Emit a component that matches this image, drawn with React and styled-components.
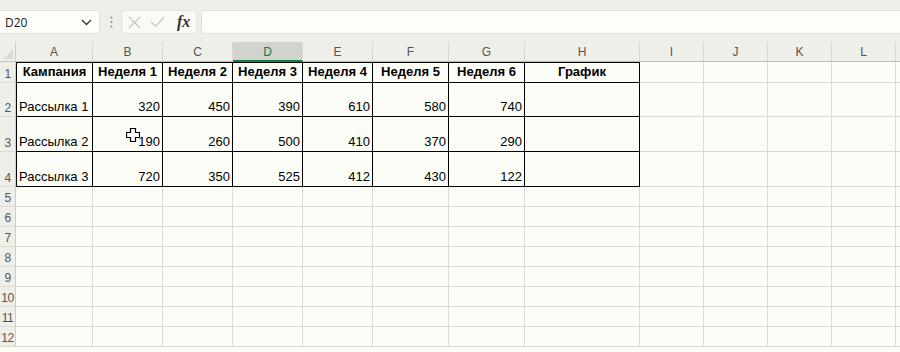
import React from "react";
import styled, { createGlobalStyle } from "styled-components";

const Global = createGlobalStyle`
  html, body { margin: 0; padding: 0; background: #fdfdf7; }
  #root { width: 900px; height: 352px; overflow: hidden; }
`;

const Page = styled.div`
  position: relative;
  width: 900px;
  height: 352px;
  overflow: hidden;
  display: flex;
  flex-direction: column;
  background: #fdfdf7;
  font-family: "Liberation Sans", Arial, sans-serif;
`;

const Toolbar = styled.div`
  height: 42px;
  flex: none;
  display: flex;
  align-items: flex-start;
  padding-top: 10px;
  box-sizing: border-box;
  background: #efefe9;
`;

const NameBox = styled.div`
  width: 100px;
  height: 24px;
  box-sizing: border-box;
  background: #fefefb;
  border: 1px solid #e2e2dc;
  border-left: none;
  border-radius: 0 4px 4px 0;
  display: flex;
  align-items: center;
  justify-content: space-between;
  padding: 0 7px 0 5px;
  font-size: 12px;
  color: #1a1a1a;
  font-family: "Open Sans", "Liberation Sans", sans-serif;
`;

const Dots = styled.div`
  width: 20px;
  height: 24px;
  display: flex;
  align-items: center;
  justify-content: center;
  margin-left: 1px;
`;

const FxBox = styled.div`
  width: 76px;
  height: 24px;
  box-sizing: border-box;
  background: #f9f9f6;
  border: 1px solid #e4e4de;
  border-radius: 4px;
  display: flex;
  align-items: center;
  padding-left: 6px;
  gap: 9px;
`;

const Fx = styled.span`
  font-family: "Liberation Serif", "Times New Roman", serif;
  font-style: italic;
  font-weight: 700;
  font-size: 16px;
  color: #333;
  margin-left: 3px;
  line-height: 1;
`;

const Formula = styled.div`
  flex: 1;
  height: 24px;
  margin-left: 4px;
  box-sizing: border-box;
  background: #fefefb;
  border: 1px solid #e0e0da;
  border-right: none;
  border-radius: 4px 0 0 4px;
`;

const Sheet = styled.div`
  display: grid;
  grid-template-columns: 16px 77px 70px 70px 70px 70px 76px 76px 115px 64px 64px 64px 64px 64px 64px;
  grid-template-rows: 20px 21px 34px 35px 35px repeat(8, 20px);
  width: 960px;
`;

const Corner = styled.div`
  background: #efefe9;
  border-right: 1px solid #cfcfca;
  border-bottom: 1px solid #bdbdb8;
  box-sizing: border-box;
  display: flex;
  align-items: flex-end;
  justify-content: flex-end;
  padding: 0 2px 2px 0;
`;

const ColHead = styled.div`
  background: ${(p) => (p.$sel ? "#d2d2ce" : "#efefe9")};
  border-right: 1px solid #dadad5;
  border-bottom: ${(p) => (p.$sel ? "2px solid #107c41" : "1px solid #bdbdb8")};
  box-sizing: border-box;
  display: flex;
  align-items: center;
  justify-content: center;
  font-size: 12px;
  color: ${(p) => (p.$sel ? "#107c41" : "#555")};
  padding-top: 1px;
`;

const RowHead = styled.div`
  background: #efefe9;
  border-right: 1px solid #cfcfca;
  border-bottom: 1px solid #dcdcd6;
  box-sizing: border-box;
  display: flex;
  align-items: flex-end;
  justify-content: center;
  padding-bottom: 1px;
  font-size: 12px;
  color: #555;
  letter-spacing: -0.5px;
`;

const Cell = styled.div`
  box-sizing: border-box;
  border-right: 1px solid ${(p) => (p.$t ? "#000" : "#dadad6")};
  border-bottom: 1px solid ${(p) => (p.$t ? "#000" : "#dadad6")};
  border-top: ${(p) => (p.$top ? "1px solid #000" : "none")};
  border-left: ${(p) => (p.$left ? "1px solid #000" : "none")};
  display: flex;
  align-items: ${(p) => (p.$head ? "center" : "flex-end")};
  justify-content: ${(p) =>
    p.$align === "right" ? "flex-end" : p.$align === "center" ? "center" : "flex-start"};
  padding: 0 2px 2px 2px;
  font-size: 13px;
  line-height: 15px;
  font-weight: ${(p) => (p.$bold ? 700 : 400)};
  color: #000;
  white-space: nowrap;
  overflow: hidden;
`;

const Cursor = styled.svg`
  position: absolute;
  left: 126px;
  top: 128px;
`;

const cols = ["A", "B", "C", "D", "E", "F", "G", "H", "I", "J", "K", "L", "", ""];
const header = ["Кампания", "Неделя 1", "Неделя 2", "Неделя 3", "Неделя 4", "Неделя 5", "Неделя 6", "График"];
const data = [
  ["Рассылка 1", 320, 450, 390, 610, 580, 740, ""],
  ["Рассылка 2", 190, 260, 500, 410, 370, 290, ""],
  ["Рассылка 3", 720, 350, 525, 412, 430, 122, ""],
];

export default function App() {
  const rows = [];
  for (let r = 1; r <= 12; r++) {
    rows.push(<RowHead key={"rh" + r}>{r}</RowHead>);
    for (let c = 0; c < 14; c++) {
      const inTable = r <= 4 && c < 8;
      let content = "";
      let align = "left";
      let bold = false;
      if (r === 1 && c < 8) {
        content = header[c];
        align = "center";
        bold = true;
      } else if (r >= 2 && r <= 4 && c < 8) {
        content = data[r - 2][c];
        align = c === 0 ? "left" : "right";
      }
      rows.push(
        <Cell
          key={r + "-" + c}
          $t={inTable}
          $top={r === 1 && c < 8}
          $left={inTable && c === 0}
          $head={r === 1}
          $align={align}
          $bold={bold}
        >
          {content}
        </Cell>
      );
    }
  }

  return (
    <Page>
      <Global />
      <Toolbar>
        <NameBox>
          <span>D20</span>
          <svg width="11" height="7" viewBox="0 0 11 7">
            <path d="M1 1 L5.5 5.5 L10 1" fill="none" stroke="#333" strokeWidth="1.3" />
          </svg>
        </NameBox>
        <Dots>
          <svg width="3" height="12" viewBox="0 0 3 12">
            <circle cx="1.5" cy="1.5" r="1" fill="#888" />
            <circle cx="1.5" cy="6" r="1" fill="#888" />
            <circle cx="1.5" cy="10.5" r="1" fill="#888" />
          </svg>
        </Dots>
        <FxBox>
          <svg width="13" height="13" viewBox="0 0 13 13">
            <path d="M1 1 L12 12 M12 1 L1 12" stroke="#c4c4c4" strokeWidth="1.2" fill="none" />
          </svg>
          <svg width="15" height="12" viewBox="0 0 15 12">
            <path d="M1 6 L5.5 10.5 L14 1.5" stroke="#c4c4c4" strokeWidth="1.2" fill="none" />
          </svg>
          <Fx>fx</Fx>
        </FxBox>
        <Formula />
      </Toolbar>
      <Sheet>
        <Corner>
          <svg width="10" height="10" viewBox="0 0 10 10">
            <path d="M10 0 L10 10 L0 10 Z" fill="#dcdcd6" />
          </svg>
        </Corner>
        {cols.map((c, i) => (
          <ColHead key={"ch" + i} $sel={c === "D"}>
            {c}
          </ColHead>
        ))}
        {rows}
      </Sheet>
      <Cursor width="14" height="14" viewBox="0 0 14 14">
        <path
          d="M4.5 0.5 H9.5 V4.5 H13.5 V9.5 H9.5 V13.5 H4.5 V9.5 H0.5 V4.5 H4.5 Z"
          fill="#fff"
          stroke="#000"
          strokeWidth="1.2"
        />
      </Cursor>
    </Page>
  );
}
